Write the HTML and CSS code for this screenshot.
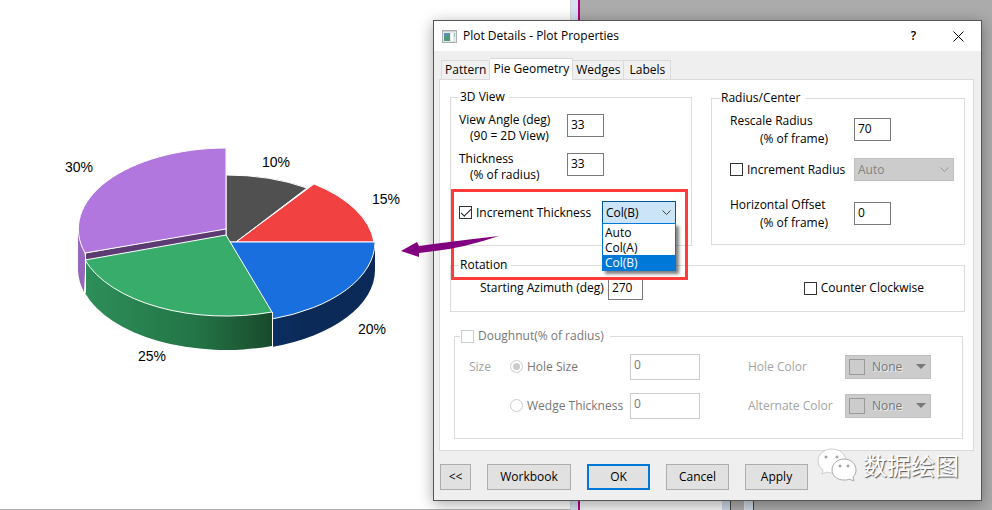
FILE: index.html
```
<!DOCTYPE html>
<html lang="en">
<head>
  <meta charset="UTF-8">
  <title>Plot Details - Plot Properties</title>
  <link rel="stylesheet" href="styles.css">
</head>
<body>
  <div class="workspace">
    <div class="graph-window">
      <svg class="pie" viewBox="0 0 430 400" role="img" aria-label="3D pie chart">
        <defs>
          <linearGradient id="green-side" x1="0" x2="1" y1="0" y2="0">
            <stop offset="0" stop-color="#2d8f59"/>
            <stop offset="0.6" stop-color="#237446"/>
            <stop offset="1" stop-color="#184a2c"/>
          </linearGradient>
          <linearGradient id="blue-side" x1="0" x2="1" y1="0" y2="0">
            <stop offset="0" stop-color="#0b2f62"/>
            <stop offset="0.3" stop-color="#0b2a57"/>
            <stop offset="1" stop-color="#0b2a57"/>
          </linearGradient>
        </defs>
        <g stroke="#fff" stroke-linejoin="round">
          <path fill="#505050" d="M226 242V175A148 81 0 0 1 307 188L236 242Z"/>
          <path fill="#f24141" d="M236 242L314 184A148 81 0 0 1 374 242Z"/>
          <path fill="#9866bd" stroke="none" d="M78 229V271Q79 283 84 292L86 252Z"/>
          <path fill="#5b3b72" d="M85 253L226 228V236L86 261Z"/>
          <path fill="#b177de" d="M226 148A148 81 0 0 0 85 253L226 229Z"/>
          <path fill="url(#blue-side)" stroke="none" d="M375 242V270A149 81 0 0 1 272 347V319Z"/>
          <path fill="#1a6fdf" d="M230 242H375A149 81 0 0 1 272 319Z"/>
          <path fill="url(#green-side)" stroke="none" d="M85 260V293A148 81 0 0 0 272 346V312Z"/>
          <path fill="#38ad6b" d="M226 235L272 312A148 81 0 0 1 85 260Z"/>
          <path fill="none" d="M272.500 312V347M85.500 253V293"/>
        </g>
        <g class="pie-labels">
          <text x="65" y="172">30%</text>
          <text x="262" y="167">10%</text>
          <text x="372" y="204">15%</text>
          <text x="358" y="334">20%</text>
          <text x="138" y="361">25%</text>
        </g>
      </svg>
    </div>
    <div class="window-edge"></div>
    <div class="backdrop">
      <div class="sheet"></div>
      <div class="sheet-edge"></div>
      <div class="sheet-gap"></div>
      <div class="sheet-edge"></div>
    </div>
  </div>

  <div class="dialog" role="dialog" aria-labelledby="dialog-title">
    <div class="title-bar">
      <svg class="app-icon" width="15" height="13" viewBox="0 0 15 13">
        <rect x="0.500" y="0.500" width="14" height="12" fill="#e9e9ec" stroke="#aaaeb2"/>
        <path fill="#cfd4d8" d="M1 1h13v1H1z"/>
        <path fill="#5d8fae" d="M2 3h6v8H2z"/>
        <path fill="#4d9a7c" d="M2 7l6-3v7H2z"/>
        <path fill="#fff" d="M9 3h2v8H9z"/>
        <path fill="#9fcbb5" d="M12 3h1v4h-1z"/>
      </svg>
      <span id="dialog-title">Plot Details - Plot Properties</span>
      <button class="title-button help" aria-label="Help">?</button>
      <button class="title-button" aria-label="Close">
        <svg width="11" height="11" viewBox="0 0 11 11"><path d="M0.500 0.500l10 10M10.500 0.500l-10 10" stroke="#000" fill="none"/></svg>
      </button>
    </div>

    <div class="dialog-body">
      <div class="tabs" role="tablist">
        <button class="tab" role="tab">Pattern</button>
        <button class="tab active" role="tab" aria-selected="true">Pie Geometry</button>
        <button class="tab" role="tab">Wedges</button>
        <button class="tab" role="tab">Labels</button>
      </div>

      <form class="panel" id="plot-form">
        <div class="columns">
          <fieldset class="group view">
            <legend>3D View</legend>
            <label for="angle">View Angle (deg)<span class="hint">(90 = 2D View)</span></label>
            <input class="box" type="text" id="angle" value="33">
            <label for="thickness">Thickness<span class="hint">(% of radius)</span></label>
            <input class="box" type="text" id="thickness" value="33">
            <label class="check"><input type="checkbox" checked>Increment Thickness</label>
            <div class="combo">
              <select class="select open" aria-label="Increment Thickness column">
                <option>Auto</option>
                <option>Col(A)</option>
                <option selected>Col(B)</option>
              </select>
              <ul class="options">
                <li>Auto</li>
                <li>Col(A)</li>
                <li class="selected">Col(B)</li>
              </ul>
            </div>
          </fieldset>

          <fieldset class="group radius">
            <legend>Radius/Center</legend>
            <label for="rescale">Rescale Radius<span class="hint">(% of frame)</span></label>
            <input class="box" type="text" id="rescale" value="70">
            <label class="check"><input type="checkbox">Increment Radius</label>
            <select class="select" aria-label="Increment Radius column" disabled>
              <option>Auto</option>
            </select>
            <label for="offset">Horizontal Offset<span class="hint">(% of frame)</span></label>
            <input class="box" type="text" id="offset" value="0">
          </fieldset>
        </div>

        <fieldset class="group rotation">
          <legend>Rotation</legend>
          <label class="azimuth" for="azimuth">Starting Azimuth (deg)</label>
          <input class="box" type="text" id="azimuth" value="270">
          <label class="check"><input type="checkbox">Counter Clockwise</label>
        </fieldset>

        <fieldset class="group doughnut">
          <legend><label class="check"><input type="checkbox" disabled>Doughnut(% of radius)</label></legend>
          <span class="faded">Size</span>
          <label class="check"><input type="radio" name="size" checked disabled>Hole Size</label>
          <input class="box" type="text" value="0" aria-label="Hole Size" disabled>
          <span class="faded">Hole Color</span>
          <button class="color" type="button" disabled><span class="swatch"></span>None<span class="caret"></span></button>
          <label class="check second"><input type="radio" name="size" disabled>Wedge Thickness</label>
          <input class="box" type="text" value="0" aria-label="Wedge Thickness" disabled>
          <span class="faded">Alternate Color</span>
          <button class="color" type="button" disabled><span class="swatch"></span>None<span class="caret"></span></button>
        </fieldset>
      </form>

      <div class="actions">
        <button class="button small">&lt;&lt;</button>
        <button class="button">Workbook</button>
        <button class="button default">OK</button>
        <button class="button">Cancel</button>
        <button class="button">Apply</button>
      </div>
    </div>
  </div>

  <!-- annotations over the dialog -->
  <div class="highlight"></div>
  <svg class="arrow" width="98" height="24" viewBox="0 0 98 24">
    <path fill="#800080" d="M0 15L16 6L18 10Q54 5 98 0Q62 12 34 15L18 17L18 21Z"/>
  </svg>
  <div class="watermark">
    <svg width="40" height="34" viewBox="0 0 40 34" fill="#fff" stroke="#aaa">
      <path stroke="#ccc" d="M15 1C7 1 1 6 1 13c0 4 2 7 5 9l-1 4 5-2c2 1 4 1 6 1 7 0 13-5 13-12S22 1 15 1z"/>
      <path d="M27 11c-7 0-12 5-12 11s5 10 12 10c2 0 4 0 5-1l5 2-1-4c2-2 3-4 3-7 0-6-5-11-12-11z"/>
      <g fill="#fff" stroke="#888"><circle cx="9" cy="9" r="1"/><circle cx="20" cy="9" r="1"/><circle cx="23" cy="18" r="1"/><circle cx="31" cy="18" r="1"/></g>
    </svg>
    <span>数据绘图</span>
  </div>
</body>
</html>
```
FILE: styles.css
```
* {
  box-sizing: border-box;
}

body {
  margin: 0;
  font-family: "Open Sans", "Noto Sans", sans-serif;
  font-size: 12px;
  line-height: 16px;
  color: #000;
}

button, input, select {
  font: inherit;
  color: inherit;
  margin: 0;
}

/* Workspace behind the dialog */
.workspace {
  display: flex;
  height: 100vh;
  min-height: 510px;
}

.graph-window {
  flex: 0 0 571px;
  border-right: 1px solid #d5d5d5;
  border-bottom: 1px solid #b0b0b0;
  background: #fff;
}

.pie {
  display: block;
  width: 430px;
}

.pie-labels {
  font-family: "Liberation Sans", Arial, sans-serif;
  font-size: 14px;
}

.window-edge {
  flex: 0 0 9px;
  background: #d5e2f0;
  border-right: 2px solid #b3007d;
}

.backdrop {
  flex: 1;
  display: flex;
  align-items: flex-end;
  background: #ababab;
}

.sheet {
  width: 142px;
  height: 30px;
  background: #f4f4f4;
}

.sheet-edge {
  width: 9px;
  height: 30px;
  background: #c9d6e3;
  border-right: 1px solid #444;
}

.sheet-gap {
  width: 14px;
  height: 30px;
  border-right: 1px solid #ddd;
}

/* Dialog */
.dialog {
  position: absolute;
  left: 433px;
  right: 10px;
  top: 20px;
  border: 1px solid #555;
  background: #efefef;
  box-shadow: 0 3px 14px rgba(0, 0, 0, 0.35);
}

.title-bar {
  display: flex;
  align-items: center;
  height: 30px;
  padding-left: 8px;
  background: #fff;
}

.app-icon {
  margin-right: 6px;
}

.title-button {
  display: flex;
  align-items: center;
  justify-content: center;
  width: 45px;
  height: 30px;
  padding: 0;
  border: none;
  background: none;
}

.title-button.help {
  margin-left: auto;
  font-weight: 600;
}

.dialog-body {
  padding: 7px 7px 10px 5px;
}

.tabs {
  display: flex;
  align-items: flex-end;
  padding-left: 2px;
}

.tab {
  height: 19px;
  padding: 0 3px;
  border: 1px solid #dadada;
  border-bottom: none;
  border-left: none;
  background: #f0f0f0;
}

.tab:first-child {
  border-left: 1px solid #dadada;
}

.tab:last-child {
  min-width: 47px;
}

.tab.active {
  height: 22px;
  padding-bottom: 2px;
  margin-bottom: -1px;
  background: #fff;
  z-index: 1;
}

.panel {
  padding: 9px 8px 11px 10px;
  border: 1px solid #dadada;
  background: #fff;
}

.columns {
  display: grid;
  grid-template-columns: 242fr 254fr;
  gap: 19px;
}

.group {
  margin: 0;
  min-width: 0;
  padding: 0 8px;
  border: 1px solid #dcdcdc;
}

.group legend {
  padding: 0 4px 0 1px;
}

.view {
  display: grid;
  grid-template-columns: 108px 35px 1fr;
  grid-template-rows: 39px 50px 40px;
  padding-top: 7px;
  height: 157px;
}

.view label,
.radius label {
  grid-column: 1;
  white-space: nowrap;
}

.hint {
  display: block;
  padding-left: 11px;
}

.box {
  width: 37px;
  height: 23px;
  padding: 0 3px 2px;
  border: 1px solid #7a7a7a;
  background: #fff;
}

.view .box {
  grid-column: 2;
  margin-top: 2px;
}

.view .check {
  grid-column: 1 / 3;
  height: 23px;
}

.check {
  display: flex;
  align-items: center;
  gap: 4px;
}

.check input {
  display: grid;
  place-items: center;
  appearance: none;
  width: 13px;
  height: 13px;
  border: 1px solid #333;
  background: #fff;
}

.check input[type="checkbox"]:checked::before {
  content: "";
  width: 9px;
  height: 4px;
  margin-bottom: 2px;
  border-left: 1px solid #222;
  border-bottom: 1px solid #222;
  transform: rotate(-45deg);
}

.check input[type="radio"] {
  border-radius: 50%;
}

.check input[type="radio"]:checked::before {
  content: "";
  width: 7px;
  height: 7px;
  border-radius: 50%;
  background: #ccc;
}

.check input:disabled {
  border-color: #ccc;
}

.combo {
  position: relative;
  width: 74px;
  height: 23px;
}

.select {
  appearance: none;
  width: 100px;
  height: 23px;
  padding: 0 3px;
  border: 1px solid #bfbfbf;
  border-radius: 0;
  color: #838383;
  opacity: 1;
  background: #ccc url("data:image/svg+xml,%3Csvg xmlns='http://www.w3.org/2000/svg' width='9' height='6'%3E%3Cpath d='M.5 .5l4 4 4-4' fill='none' stroke='%23999'/%3E%3C/svg%3E") no-repeat right 4px center;
}

.select.open {
  width: 74px;
  border-color: #005499;
  color: #000;
  background-color: #cce4f7;
  background-image: url("data:image/svg+xml,%3Csvg xmlns='http://www.w3.org/2000/svg' width='9' height='6'%3E%3Cpath d='M.5 .5l4 4 4-4' fill='none' stroke='%23444'/%3E%3C/svg%3E");
}

.options {
  position: absolute;
  top: 22px;
  left: 0;
  z-index: 2;
  width: 74px;
  margin: 0;
  padding: 1px 0 0;
  border: 1px solid #0078d7;
  background: #fff;
  box-shadow: 3px 3px 3px rgba(0, 0, 0, 0.5);
  line-height: 15px;
  list-style: none;
}

.options li {
  padding-left: 2px;
}

.options .selected {
  background: #0078d7;
  color: #fff;
}

.radius {
  display: grid;
  grid-template-columns: 124px 1fr;
  grid-template-rows: 46px 38px 40px;
  padding: 5px 10px 0 18px;
  height: 156px;
  line-height: 18px;
}

.radius legend {
  margin-left: -10px;
}

.radius .hint {
  padding-left: 30px;
}

.radius .box {
  margin-top: 6px;
}

.radius .check {
  height: 23px;
}

.rotation {
  display: flex;
  align-items: center;
  width: 100%;
  height: 55px;
  margin-top: 11px;
  padding: 0 40px 8px 8px;
}

.azimuth {
  margin-left: 21px;
}

.rotation .box {
  width: 35px;
  margin-left: 4px;
}

.rotation .check {
  margin-left: auto;
}

.doughnut {
  display: grid;
  grid-template-columns: 41px 120px 118px 97px 86px;
  grid-template-rows: 39px 39px;
  align-items: center;
  height: 111px;
  margin: 16px 2px 0 4px;
  padding: 3px 8px 0 14px;
  color: #777;
}

.doughnut legend {
  margin-left: -9px;
  padding-right: 6px;
}

.doughnut .box {
  width: 70px;
  height: 26px;
  border-color: #ccc;
  padding-bottom: 4px;
}

.second {
  grid-column: 2;
}

.faded {
  color: #a3a3a3;
}

.color {
  display: flex;
  align-items: center;
  width: 86px;
  height: 24px;
  padding: 0 4px 0 3px;
  border: 1px solid #bfbfbf;
  background: #ccc;
  text-shadow: 1px 1px 0 #eee;
}

.swatch {
  width: 16px;
  height: 16px;
  margin-right: 7px;
  border: 1px solid #999;
}

.caret {
  margin-left: auto;
  border: 5px solid transparent;
  border-top-color: #777;
  border-bottom: none;
}

.actions {
  display: grid;
  grid-template-columns: 31px 84px 63px 63px 63px;
  column-gap: 16px;
  padding: 13px 0 0 1px;
}

.button {
  height: 26px;
  padding: 0;
  border: 1px solid #adadad;
  background: #e1e1e1;
}

.button.default {
  border: 2px solid #0078d7;
}

/* Annotations */
.highlight {
  position: absolute;
  left: 451px;
  top: 189px;
  width: 237px;
  height: 91px;
  border: 3px solid #ff3b3b;
}

.arrow {
  position: absolute;
  left: 401px;
  top: 236px;
}

.watermark {
  position: absolute;
  right: 33px;
  top: 448px;
  display: flex;
  align-items: center;
  gap: 6px;
  color: #fff;
  font-family: "Noto Sans CJK SC", sans-serif;
  font-size: 24px;
  line-height: 34px;
  text-shadow: 1px 1px 1px #555;
}
```
